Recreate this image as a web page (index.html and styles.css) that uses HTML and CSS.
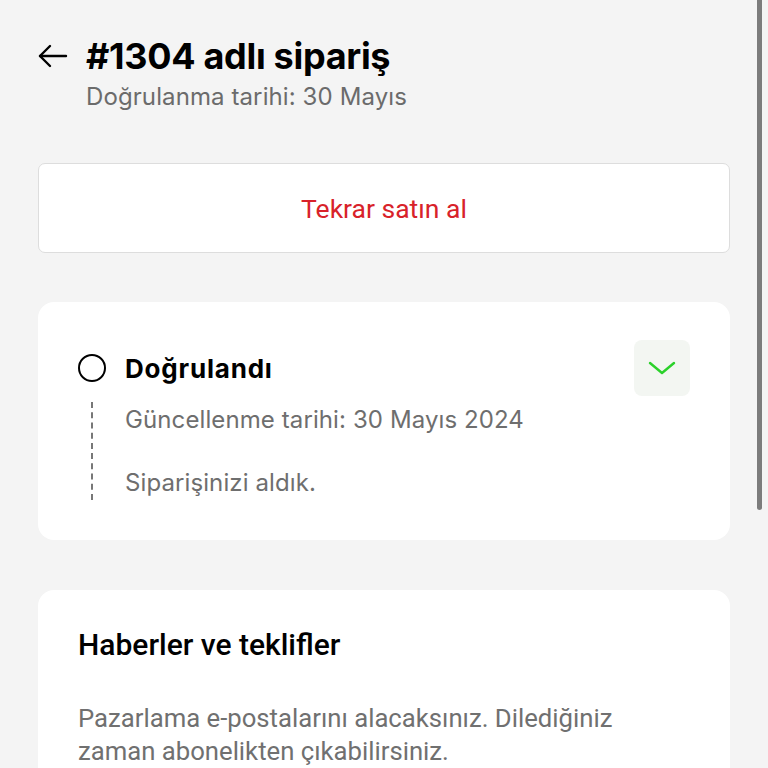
FILE: index.html
```html
<!DOCTYPE html>
<html lang="tr">
<head>
    <meta charset="UTF-8">
    <meta name="viewport" content="width=device-width, initial-scale=1.0">
    <title>#1304 adlı sipariş</title>
    <link rel="stylesheet" href="styles.css">
</head>
<body>
    <div class="page">
        <header class="header">
            <div class="title-row">
                <svg class="back" width="30" height="24" viewBox="0 0 30 24" fill="none" stroke="#000" stroke-width="2.4" stroke-linecap="round" stroke-linejoin="round">
                    <path d="M2 12H28"/>
                    <path d="M12 2L2 12L12 22"/>
                </svg>
                <h1>#1304 adlı sipariş</h1>
            </div>
            <p class="subtitle">Doğrulanma tarihi: 30 Mayıs</p>
        </header>

        <div class="card buy-again">Tekrar satın al</div>

        <div class="card status">
            <div class="status-head">
                <span class="dot"></span>
                <h2>Doğrulandı</h2>
                <div class="toggle">
                    <svg width="28" height="16" viewBox="0 0 28 16" fill="none" stroke="#2bd12b" stroke-width="2.4" stroke-linecap="round" stroke-linejoin="round">
                        <path d="M2 3L14 13L26 3"/>
                    </svg>
                </div>
            </div>
            <div class="status-body">
                <div class="rail"></div>
                <div class="status-text">
                    <p>Güncellenme tarihi: 30 Mayıs 2024</p>
                    <p>Siparişinizi aldık.</p>
                </div>
            </div>
        </div>

        <div class="card news">
            <h3>Haberler ve teklifler</h3>
            <p>Pazarlama e-postalarını alacaksınız. Dilediğiniz zaman abonelikten çıkabilirsiniz.</p>
        </div>
    </div>

    <div class="scroll-thumb"></div>
</body>
</html>
```

FILE: styles.css
```css
* {
    margin: 0;
    padding: 0;
    box-sizing: border-box;
}

body {
    font-family: Inter, "Noto Sans", sans-serif;
    background: #f4f4f4;
    color: #000;
    height: 768px;
    overflow: hidden;
}

.page {
    padding: 36px 38px 0;
}

.title-row {
    display: flex;
    align-items: center;
    gap: 18px;
}

.back {
    display: block;
}

h1 {
    font-size: 36px;
    font-weight: 700;
    line-height: 40px;
    letter-spacing: -0.3px;
}

.subtitle {
    margin: 7px 0 0 48px;
    font-size: 24px;
    line-height: 28px;
    letter-spacing: 0.1px;
    color: #6b6b6b;
}

.card {
    background: #fff;
    border-radius: 16px;
}

.buy-again {
    margin-top: 52px;
    height: 90px;
    border: 1px solid #dddddd;
    border-radius: 7px;
    display: flex;
    align-items: center;
    justify-content: center;
    font-family: Roboto, "Noto Sans", sans-serif;
    font-size: 26.5px;
    color: #d8222a;
}

.status {
    margin-top: 49px;
    padding: 38px 40px 40px;
}

.status-head {
    display: flex;
    align-items: center;
    height: 56px;
}

.dot {
    width: 28px;
    height: 28px;
    border: 2.5px solid #000;
    border-radius: 50%;
    flex-shrink: 0;
}

h2 {
    margin-left: 19px;
    font-size: 26px;
    font-weight: 700;
    letter-spacing: 0.8px;
    flex: 1;
}

.toggle {
    width: 56px;
    height: 56px;
    border-radius: 8px;
    background: #f3f6f2;
    display: flex;
    align-items: center;
    justify-content: center;
}

.status-body {
    display: flex;
    margin-top: 6px;
}

.rail {
    width: 28px;
    flex-shrink: 0;
    display: flex;
    justify-content: center;
}

.rail::before {
    content: "";
    width: 0;
    height: 98px;
    border-left: 2px dashed #777;
}

.status-text {
    margin-left: 19px;
    padding-top: 3px;
    display: flex;
    flex-direction: column;
    gap: 33px;
}

.status-text p {
    font-size: 24px;
    line-height: 30px;
    letter-spacing: 0.1px;
    color: #6e6e6e;
}

.news {
    margin-top: 50px;
    padding: 40px 60px 40px 40px;
    font-family: Roboto, "Noto Sans", sans-serif;
}

h3 {
    font-size: 30px;
    font-weight: 500;
    line-height: 30px;
}

.news p {
    margin-top: 42px;
    font-size: 25.7px;
    line-height: 33px;
    color: #707070;
}

.scroll-thumb {
    position: absolute;
    top: -6px;
    right: 6px;
    width: 5px;
    height: 516px;
    border-radius: 3px;
    background: #7c7c7c;
}
```
